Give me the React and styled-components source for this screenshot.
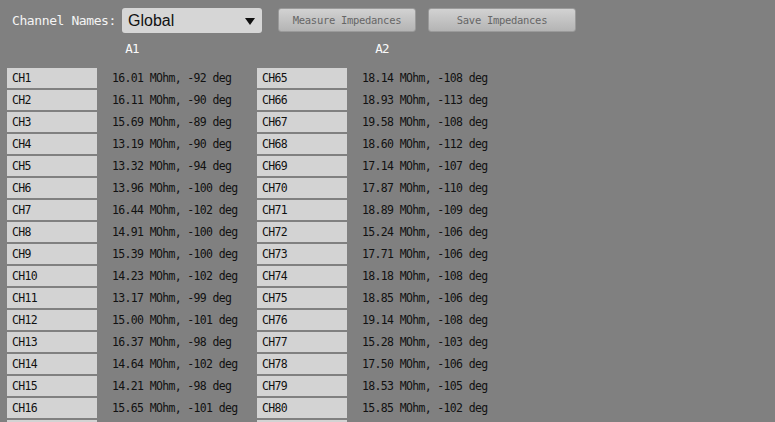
import React, { useState } from 'react';
import styled, { createGlobalStyle } from 'styled-components';

const GlobalStyle = createGlobalStyle`
  html, body {
    margin: 0;
    padding: 0;
    background: #808080;
  }
  body {
    font-family: 'DejaVu Sans Mono', 'Liberation Mono', monospace;
  }
`;

const bank1 = [
  [16.01, -92], [16.11, -90], [15.69, -89], [13.19, -90],
  [13.32, -94], [13.96, -100], [16.44, -102], [14.91, -100],
  [15.39, -100], [14.23, -102], [13.17, -99], [15.0, -101],
  [16.37, -98], [14.64, -102], [14.21, -98], [15.65, -101],
  [14.88, -99], [15.12, -100],
];

const bank2 = [
  [18.14, -108], [18.93, -113], [19.58, -108], [18.6, -112],
  [17.14, -107], [17.87, -110], [18.89, -109], [15.24, -106],
  [17.71, -106], [18.18, -108], [18.85, -106], [19.14, -108],
  [15.28, -103], [17.5, -106], [18.53, -105], [15.85, -102],
  [16.92, -104], [17.33, -107],
];

const banks = [
  { name: 'A1', first: 1, data: bank1 },
  { name: 'A2', first: 65, data: bank2 },
];

export default function App() {
  const [names, setNames] = useState('Global');

  return (
    <>
      <GlobalStyle />
      <Page>
        <Toolbar>
          <Label>Channel Names:</Label>
          <Select value={names} onChange={(e) => setNames(e.target.value)}>
            <span>{names}</span>
            <Arrow />
          </Select>
          <Button $gap={16} $width={138}>Measure Impedances</Button>
          <Button $gap={12} $width={148}>Save Impedances</Button>
        </Toolbar>
        <Banks>
          {banks.map((bank) => (
            <Bank key={bank.name}>
              <BankTitle>{bank.name}</BankTitle>
              {bank.data.map(([mag, phase], i) => (
                <Row key={i}>
                  <NameBox>CH{bank.first + i}</NameBox>
                  <Value>
                    {mag.toFixed(2)} MOhm, {phase} deg
                  </Value>
                </Row>
              ))}
            </Bank>
          ))}
        </Banks>
      </Page>
    </>
  );
}

const Page = styled.div`
  width: 775px;
  height: 422px;
  overflow: hidden;
  background: #808080;
`;

const Toolbar = styled.div`
  display: flex;
  align-items: center;
  height: 25px;
  padding: 8px 0 0 12px;
`;

const Label = styled.span`
  font-size: 13px;
  letter-spacing: -0.4px;
  color: #f4f4f4;
  width: 110px;
`;

const Select = styled.div`
  display: flex;
  align-items: center;
  justify-content: space-between;
  box-sizing: border-box;
  width: 140px;
  height: 25px;
  padding: 0 7px 0 6px;
  background: #d6d6d6;
  border-radius: 3px;
  font-family: 'Liberation Sans', Arial, sans-serif;
  font-size: 16px;
  color: #111;
`;

const Arrow = styled.span`
  width: 0;
  height: 0;
  border-left: 5px solid transparent;
  border-right: 5px solid transparent;
  border-top: 7px solid #111;
  margin-top: 1px;
`;

const Button = styled.div`
  display: flex;
  align-items: center;
  justify-content: center;
  box-sizing: border-box;
  margin-left: ${(p) => p.$gap}px;
  width: ${(p) => p.$width}px;
  height: 24px;
  align-self: flex-start;
  border: 1px solid #9a9a9a;
  border-radius: 3px;
  background: linear-gradient(#d2d2d2, #b4b4b4);
  font-size: 10.5px;
  letter-spacing: -0.3px;
  color: #666;
`;

const Banks = styled.div`
  display: flex;
  padding-left: 7px;
`;

const Bank = styled.div`
  display: flex;
  flex-direction: column;
  width: 250px;
  gap: 2px;
`;

const BankTitle = styled.div`
  text-align: center;
  font-size: 12.5px;
  letter-spacing: -0.7px;
  color: #fafafa;
  height: 14px;
  line-height: 14px;
  margin: 9px 0 10px;
`;

const Row = styled.div`
  display: flex;
  align-items: center;
  height: 20px;
`;

const NameBox = styled.div`
  box-sizing: border-box;
  width: 90px;
  height: 20px;
  line-height: 20px;
  padding-left: 5px;
  background: #d3d3d3;
  font-size: 11.5px;
  letter-spacing: -0.65px;
  color: #111;
`;

const Value = styled.span`
  margin-left: 15px;
  font-size: 11.5px;
  letter-spacing: -0.65px;
  color: #111;
  white-space: pre;
`;
